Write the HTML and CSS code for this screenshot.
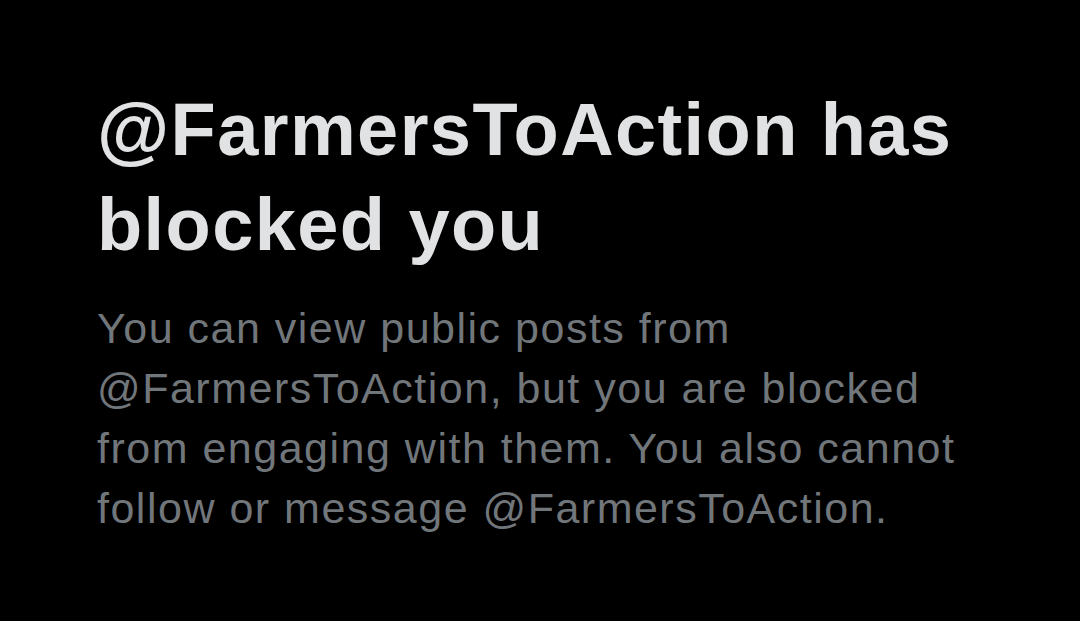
FILE: index.html
```html
<!DOCTYPE html>
<html lang="en">
<head>
    <meta charset="UTF-8">
    <title>Blocked</title>
    <link rel="stylesheet" href="styles.css">
</head>
<body>
    <div class="blocked">
        <h1 class="blocked-title">@FarmersToAction has blocked you</h1>
        <p class="blocked-text">You can view public posts from @FarmersToAction, but you are blocked from engaging with them. You also cannot follow or message @FarmersToAction.</p>
    </div>
</body>
</html>
```

FILE: styles.css
```css
* {
    margin: 0;
    padding: 0;
    box-sizing: border-box;
}
body {
    background: #000;
    width: 1080px;
    height: 621px;
    overflow: hidden;
    font-family: "Liberation Sans", Arial, sans-serif;
}
.blocked {
    padding: 82px 0 0 97px;
    width: 1000px;
}
.blocked-title {
    font-size: 74px;
    line-height: 95px;
    font-weight: 700;
    letter-spacing: 1.4px;
    color: #e1e2e3;
}
.blocked-text {
    margin-top: 26px;
    font-size: 43px;
    line-height: 60px;
    letter-spacing: 1.5px;
    color: #71767b;
    width: 880px;
}
```
